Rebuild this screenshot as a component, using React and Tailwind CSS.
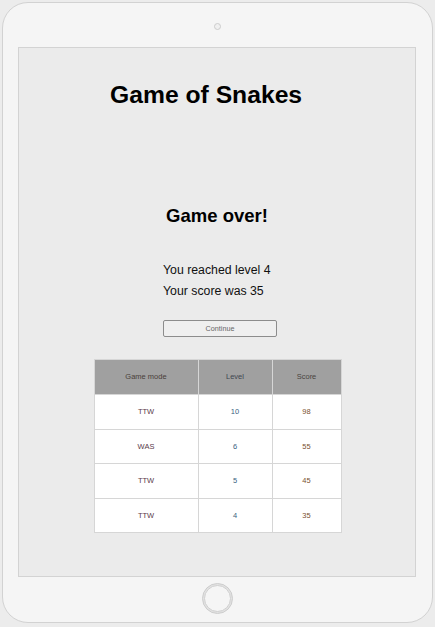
import React from "react";

const rows = [
  ["TTW", "10", "98"],
  ["WAS", "6", "55"],
  ["TTW", "5", "45"],
  ["TTW", "4", "35"],
];

export default function App() {
  return (
    <div
      className="w-[435px] h-[627px] bg-[#ececec] p-[2px] overflow-hidden"
      style={{ fontFamily: '"Liberation Sans", Arial, sans-serif' }}
    >
      <div className="w-[431px] h-[621px] rounded-[26px] border border-[#d2d2d2] bg-[#f5f5f5] flex flex-col items-center">
        <div className="mt-[20px] w-[7px] h-[7px] rounded-full border border-[#cccccc] bg-[#f0f0f0]" />
        <div className="mt-[17px] self-start ml-[15px] w-[398px] h-[530px] border border-[#d3d3d3] bg-[#ebebeb] flex flex-col">
          <h1 className="mt-[34px] pl-[91px] text-[24.7px] leading-[25px] font-bold text-black">
            Game of Snakes
          </h1>
          <h2 className="mt-[99px] text-center text-[18.5px] leading-[19px] font-bold text-black">
            Game over!
          </h2>
          <div className="mt-[35px] self-start ml-[144px] flex flex-col items-start">
            <div className="text-[12.3px] leading-[20.5px] text-[#111]">You reached level 4</div>
            <div className="text-[12.3px] leading-[20.5px] text-[#111]">Your score was 35</div>
            <button className="mt-[19px] w-[114px] h-[17px] rounded-[2px] border border-[#8c8c8c] bg-[#efefef] text-[7.2px] leading-none text-[#666] flex items-center justify-center">
              Continue
            </button>
          </div>
          <div className="mt-[22px] self-center ml-[1px] grid grid-cols-[103px_73px_68px] gap-px p-px bg-[#d6d6d6]">
            <div className="h-[34px] bg-[#a0a0a0] flex items-center justify-center text-[7.5px] text-[#4a3f3a]">Game mode</div>
            <div className="h-[34px] bg-[#a0a0a0] flex items-center justify-center text-[7.5px] text-[#3f4750]">Level</div>
            <div className="h-[34px] bg-[#a0a0a0] flex items-center justify-center text-[7.5px] text-[#4a4540]">Score</div>
            {rows.map((r, i) => (
              <React.Fragment key={i}>
                <div className="h-[33.5px] bg-white flex items-center justify-center text-[7.5px] text-[#5a3a4a]">{r[0]}</div>
                <div className="h-[33.5px] bg-white flex items-center justify-center text-[7.5px] text-[#3a5f80]">{r[1]}</div>
                <div className="h-[33.5px] bg-white flex items-center justify-center text-[7.5px] text-[#7a5030]">{r[2]}</div>
              </React.Fragment>
            ))}
          </div>
        </div>
        <div className="mt-[6px] w-[31px] h-[31px] rounded-full border-[1.5px] border-[#cdcdcd] p-[1px] bg-[#e2e2e2]">
          <div className="w-full h-full rounded-full border-[1.5px] border-[#d0d0d0] bg-[#f5f5f5]" />
        </div>
      </div>
    </div>
  );
}
